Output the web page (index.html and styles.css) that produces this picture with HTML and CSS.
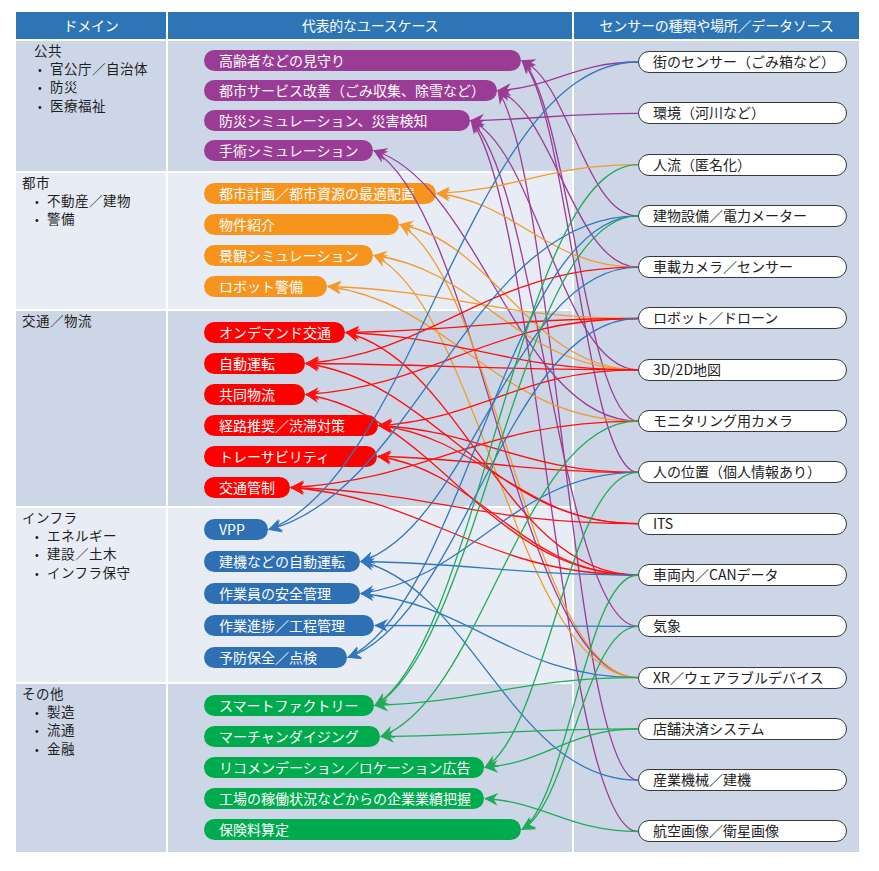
FILE: index.html
```html
<!DOCTYPE html>
<html lang="ja">
<head>
<meta charset="utf-8">
<title>ドメイン・ユースケース・データソース</title>
<link rel="stylesheet" href="styles.css">
</head>
<body>
<div class="board">
  <div class="hd">ドメイン</div>
  <div class="hd">代表的なユースケース</div>
  <div class="hd">センサーの種類や場所／データソース</div>

  <div class="domain dark">
    <div class="dtitle first">公共</div>
    <ul class="dlist first">
      <li>官公庁／自治体</li>
      <li>防災</li>
      <li>医療福祉</li>
    </ul>
  </div>
  <div class="cases dark gap9">
    <div class="uc purple len-317" data-node="p1">高齢者などの見守り</div>
    <div class="uc purple len-293" data-node="p2">都市サービス改善（ごみ収集、除雪など）</div>
    <div class="uc purple len-266" data-node="p3">防災シミュレーション、災害検知</div>
    <div class="uc purple len-169" data-node="p4">手術シミュレーション</div>
  </div>

  <div class="domain light">
    <div class="dtitle">都市</div>
    <ul class="dlist">
      <li>不動産／建物</li>
      <li>警備</li>
    </ul>
  </div>
  <div class="cases light gap10 pad10">
    <div class="uc orange len-232" data-node="o1">都市計画／都市資源の最適配置</div>
    <div class="uc orange len-195" data-node="o2">物件紹介</div>
    <div class="uc orange len-169" data-node="o3">景観シミュレーション</div>
    <div class="uc orange len-123" data-node="o4">ロボット警備</div>
  </div>

  <div class="domain dark">
    <div class="dtitle">交通／物流</div>
  </div>
  <div class="cases dark gap10 pad11">
    <div class="uc red len-141" data-node="r1">オンデマンド交通</div>
    <div class="uc red len-101" data-node="r2">自動運転</div>
    <div class="uc red len-101" data-node="r3">共同物流</div>
    <div class="uc red len-174" data-node="r4">経路推奨／渋滞対策</div>
    <div class="uc red len-173" data-node="r5">トレーサビリティ</div>
    <div class="uc red len-86" data-node="r6">交通管制</div>
  </div>

  <div class="domain light">
    <div class="dtitle">インフラ</div>
    <ul class="dlist">
      <li>エネルギー</li>
      <li>建設／土木</li>
      <li>インフラ保守</li>
    </ul>
  </div>
  <div class="cases light gap11 pad11">
    <div class="uc blue len-64" data-node="b1">VPP</div>
    <div class="uc blue len-156" data-node="b2">建機などの自動運転</div>
    <div class="uc blue len-156" data-node="b3">作業員の安全管理</div>
    <div class="uc blue len-170" data-node="b4">作業進捗／工程管理</div>
    <div class="uc blue len-143" data-node="b5">予防保全／点検</div>
  </div>

  <div class="domain dark">
    <div class="dtitle">その他</div>
    <ul class="dlist">
      <li>製造</li>
      <li>流通</li>
      <li>金融</li>
    </ul>
  </div>
  <div class="cases dark gap10 pad11">
    <div class="uc green len-170" data-node="g1">スマートファクトリー</div>
    <div class="uc green len-176" data-node="g2">マーチャンダイジング</div>
    <div class="uc green len-280" data-node="g3">リコメンデーション／ロケーション広告</div>
    <div class="uc green len-280" data-node="g4">工場の稼働状況などからの企業業績把握</div>
    <div class="uc green len-317" data-node="g5">保険料算定</div>
  </div>

  <div class="sensors">
    <div class="src" data-node="s1">街のセンサー（ごみ箱など）</div>
    <div class="src" data-node="s2">環境（河川など）</div>
    <div class="src" data-node="s3">人流（匿名化）</div>
    <div class="src" data-node="s4">建物設備／電力メーター</div>
    <div class="src" data-node="s5">車載カメラ／センサー</div>
    <div class="src" data-node="s6">ロボット／ドローン</div>
    <div class="src" data-node="s7">3D/2D地図</div>
    <div class="src" data-node="s8">モニタリング用カメラ</div>
    <div class="src" data-node="s9">人の位置（個人情報あり）</div>
    <div class="src" data-node="s10">ITS</div>
    <div class="src" data-node="s11">車両内／CANデータ</div>
    <div class="src" data-node="s12">気象</div>
    <div class="src" data-node="s13">XR／ウェアラブルデバイス</div>
    <div class="src" data-node="s14">店舗決済システム</div>
    <div class="src" data-node="s15">産業機械／建機</div>
    <div class="src" data-node="s16">航空画像／衛星画像</div>
  </div>

  <svg class="links" xmlns="http://www.w3.org/2000/svg"></svg>
</div>
<script src="script.js"></script>
</body>
</html>
```

FILE: styles.css
```css
html, body {
  margin: 0;
  padding: 0;
  background: #ffffff;
}

body {
  font-family: "Noto Sans CJK JP", "Noto Sans", sans-serif;
  font-size: 14px;
  color: #1e1e1e;
}

.board {
  position: relative;
  display: grid;
  grid-template-columns: 150px 404px 285px;
  grid-template-rows: 27px 130px 136px 195px 174px 168px;
  column-gap: 2px;
  row-gap: 2px;
  width: 843px;
  margin: 12px 0 0 16px;
}

.hd {
  background: #2e75b6;
  color: #ffffff;
  text-align: center;
  line-height: 27px;
  font-size: 14px;
  letter-spacing: -0.2px;
}

.dark { background: #cdd6e6; }
.light { background: #e8ecf4; }

.domain {
  grid-column: 1;
  padding: 1px 0 0 6px;
  font-size: 13.5px;
  letter-spacing: 0.5px;
  line-height: 17.5px;
}

.dtitle.first { margin-left: 12px; }

.dlist {
  list-style: none;
  margin: 0;
  padding: 0 0 0 13px;
}
.dlist.first { padding-left: 16px; }

.dlist li::before {
  content: "•";
  display: inline-block;
  width: 12px;
  font-size: 11px;
}

.cases {
  grid-column: 2;
  display: flex;
  flex-direction: column;
  align-items: flex-start;
  padding: 9px 0 0 36px;
}
.gap9 { gap: 9px; }
.gap10 { gap: 10px; }
.gap11 { gap: 11px; }
.pad10 { padding-top: 10px; }
.pad11 { padding-top: 11px; }

.uc {
  box-sizing: border-box;
  height: 21px;
  border-radius: 11px;
  color: #ffffff;
  line-height: 21px;
  padding-left: 15px;
  white-space: nowrap;
  font-size: 14px;
}
.purple { background: #9a3c96; }
.orange { background: #f7941d; }
.red { background: #ff0000; }
.blue { background: #2e70b3; }
.green { background: #00ab4e; }

.len-317 { width: 317px; }
.len-293 { width: 293px; }
.len-266 { width: 266px; }
.len-169 { width: 169px; }
.len-232 { width: 232px; }
.len-195 { width: 195px; }
.len-123 { width: 123px; }
.len-141 { width: 141px; }
.len-101 { width: 101px; }
.len-174 { width: 174px; }
.len-173 { width: 173px; }
.len-86 { width: 86px; }
.len-64 { width: 64px; }
.len-156 { width: 156px; }
.len-170 { width: 170px; }
.len-143 { width: 143px; }
.len-176 { width: 176px; }
.len-280 { width: 280px; }

.sensors {
  grid-column: 3;
  grid-row: 2 / 7;
  background: #cdd6e6;
  display: flex;
  flex-direction: column;
  gap: 29.3px;
  padding: 10px 0 0 64px;
}

.src {
  box-sizing: border-box;
  width: 209px;
  height: 22px;
  border: 1.6px solid #383838;
  border-radius: 11px;
  background: #ffffff;
  color: #222222;
  line-height: 19px;
  padding-left: 14px;
  white-space: nowrap;
  font-size: 14px;
}

.links {
  position: absolute;
  left: 0;
  top: 0;
  width: 100%;
  height: 100%;
  overflow: visible;
  pointer-events: none;
}
```

FILE: script.js
```js
(function () {
  var colors = {
    purple: '#9a3c96',
    orange: '#f39a2b',
    red: '#ff1010',
    blue: '#3277bd',
    green: '#1fab5a'
  };
  var conns = [
    ['s1', 'p2', 'purple'], ['s2', 'p3', 'purple'], ['s4', 'p1', 'purple'],
    ['s8', 'p1', 'purple'], ['s9', 'p1', 'purple'], ['s5', 'p2', 'purple'],
    ['s15', 'p2', 'purple'], ['s12', 'p3', 'purple'], ['s16', 'p3', 'purple'],
    ['s7', 'p3', 'purple'], ['s13', 'p4', 'purple'], ['s8', 'p4', 'purple'],

    ['s3', 'o1', 'orange'], ['s5', 'o1', 'orange'], ['s7', 'o2', 'orange'],
    ['s7', 'o3', 'orange'], ['s6', 'o4', 'orange'], ['s8', 'o4', 'orange'],
    ['s13', 'o2', 'orange'], ['s13', 'o3', 'orange'],

    ['s5', 'r2', 'red'], ['s6', 'r1', 'red'], ['s7', 'r1', 'red'],
    ['s7', 'r2', 'red'], ['s7', 'r4', 'red'], ['s9', 'r4', 'red'],
    ['s9', 'r5', 'red'], ['s10', 'r2', 'red'], ['s10', 'r4', 'red'],
    ['s10', 'r6', 'red'], ['s11', 'r1', 'red'], ['s11', 'r3', 'red'],
    ['s11', 'r5', 'red'], ['s11', 'r6', 'red'], ['s8', 'r6', 'red'],
    ['s6', 'r3', 'red'],

    ['s1', 'b1', 'blue'], ['s4', 'b1', 'blue'], ['s4', 'b5', 'blue'],
    ['s5', 'b2', 'blue'], ['s6', 'b5', 'blue'], ['s9', 'b3', 'blue'],
    ['s12', 'b4', 'blue'], ['s13', 'b3', 'blue'], ['s15', 'b2', 'blue'],
    ['s11', 'b2', 'blue'],

    ['s3', 'g1', 'green'], ['s4', 'g1', 'green'], ['s8', 'g2', 'green'],
    ['s9', 'g3', 'green'], ['s11', 'g5', 'green'], ['s14', 'g2', 'green'],
    ['s14', 'g3', 'green'], ['s16', 'g4', 'green'], ['s13', 'g1', 'green'],
    ['s12', 'g5', 'green']
  ];

  var ns = 'http://www.w3.org/2000/svg';
  var board = document.querySelector('.board');
  var svg = document.querySelector('.links');
  var root = board.getBoundingClientRect();

  var defs = document.createElementNS(ns, 'defs');
  Object.keys(colors).forEach(function (k) {
    var m = document.createElementNS(ns, 'marker');
    m.setAttribute('id', 'arrow-' + k);
    m.setAttribute('viewBox', '0 -7 14 14');
    m.setAttribute('refX', '13');
    m.setAttribute('refY', '0');
    m.setAttribute('markerWidth', '14');
    m.setAttribute('markerHeight', '14');
    m.setAttribute('markerUnits', 'userSpaceOnUse');
    m.setAttribute('orient', 'auto');
    var p = document.createElementNS(ns, 'path');
    p.setAttribute('d', 'M14,0 L0,-6.5 L4.5,0 L0,6.5 Z');
    p.setAttribute('fill', colors[k]);
    m.appendChild(p);
    defs.appendChild(m);
  });
  svg.appendChild(defs);

  function node(id) {
    return document.querySelector('[data-node="' + id + '"]').getBoundingClientRect();
  }

  conns.forEach(function (c) {
    var a = node(c[0]);
    var b = node(c[1]);
    var xs = a.left - root.left;
    var ys = a.top + a.height / 2 - root.top;
    var xe = b.right - root.left + 1;
    var ye = b.top + b.height / 2 - root.top;
    var dx = xs - xe;
    var dy = ys - ye;
    var c1x = xs - 0.45 * dx, c1y = ys;
    var c2x = xe + 0.4 * dx, c2y = ye + 0.12 * dy;
    var d = 'M' + xs.toFixed(1) + ',' + ys.toFixed(1) +
      ' C' + c1x.toFixed(1) + ',' + c1y.toFixed(1) +
      ' ' + c2x.toFixed(1) + ',' + c2y.toFixed(1) +
      ' ' + xe.toFixed(1) + ',' + ye.toFixed(1);
    var p = document.createElementNS(ns, 'path');
    p.setAttribute('d', d);
    p.setAttribute('fill', 'none');
    p.setAttribute('stroke', colors[c[2]]);
    p.setAttribute('stroke-width', '1.3');
    p.setAttribute('marker-end', 'url(#arrow-' + c[2] + ')');
    svg.appendChild(p);
  });
})();
```
